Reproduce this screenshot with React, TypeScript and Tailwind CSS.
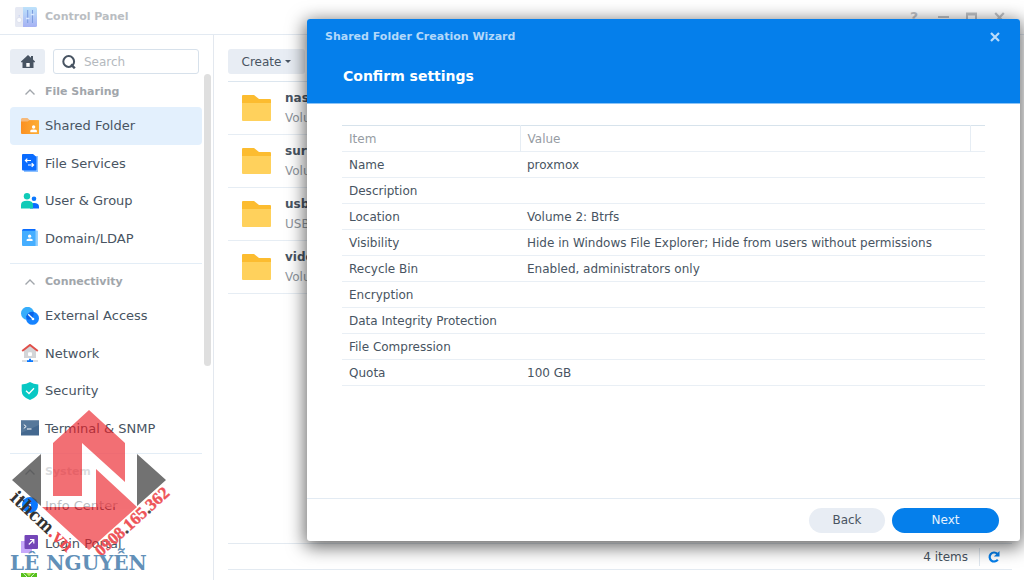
import type { ReactNode } from "react";
import clsx from "clsx";

interface NavItem {
  label: string;
  icon: ReactNode;
  active?: boolean;
}

interface NavGroup {
  title: string;
  items: NavItem[];
}

function Icon({ children }: { children: ReactNode }) {
  return (
    <svg viewBox="0 0 18 18" className="h-[18px] w-[18px] shrink-0" aria-hidden="true">
      {children}
    </svg>
  );
}

const groups: NavGroup[] = [
  {
    title: "File Sharing",
    items: [
      {
        label: "Shared Folder",
        active: true,
        icon: (
          <Icon>
            <path d="M0 2.5Q0 1 1.2 1H6.5L8.5 3H16.5Q17.6 3 17.6 4V9H0Z" fill="#f6b97a" />
            <path d="M0 4.5H6.5L8.5 3.2H18V17H1Q0 17 0 16Z" fill="url(#orange)" />
            <circle cx="12.6" cy="10" r="1.7" fill="#fff" />
            <path d="M9.3 15.2V14Q9.3 12.6 12.6 12.6T15.9 14V15.2Z" fill="#fff" />
            <defs>
              <linearGradient id="orange">
                <stop stopColor="#fb9022" />
                <stop offset="1" stopColor="#fdae35" />
              </linearGradient>
            </defs>
          </Icon>
        ),
      },
      {
        label: "File Services",
        icon: (
          <Icon>
            <path d="M3 2H17V18H3Z" fill="#8fc2ff" />
            <path d="M1 1Q1 0 2 0H12L15.5 3V15.5Q15.5 16.5 14.5 16.5H2Q1 16.5 1 15.5Z" fill="#0a6cff" />
            <path d="M10 6.5H4.5M6.3 4.6L4.4 6.5L6.3 8.4M7 11H12.5M10.7 9.1L12.6 11L10.7 12.9" fill="none" stroke="#fff" strokeWidth="1.2" />
          </Icon>
        ),
      },
      {
        label: "User & Group",
        icon: (
          <Icon>
            <circle cx="6" cy="4.2" r="3.2" fill="#10cbb8" />
            <circle cx="13" cy="6.8" r="2.3" fill="#0a78ff" />
            <path d="M9 16.5V13Q9 11 13 11Q18 11 18 14.5V16.5Z" fill="#0a6cff" />
            <path d="M0 16.5V13Q0 8.8 6 8.8T12 13V16.5Z" fill="#10cbb8" />
          </Icon>
        ),
      },
      {
        label: "Domain/LDAP",
        icon: (
          <Icon>
            <path d="M1 1.5Q1 0 2.5 0H14.5V3H1Z" fill="#0a6cff" />
            <path d="M1 1.8H16.5V17H2Q1 17 1 16Z" fill="#45aeff" />
            <path d="M14.5 1.8H16.5V17H14.5Z" fill="#8fceff" />
            <circle cx="8.6" cy="7.2" r="1.6" fill="#fff" />
            <path d="M5.6 12V11Q5.6 9.5 8.6 9.5T11.6 11V12Z" fill="#fff" />
          </Icon>
        ),
      },
    ],
  },
  {
    title: "Connectivity",
    items: [
      {
        label: "External Access",
        icon: (
          <Icon>
            <circle cx="6.5" cy="6.3" r="6.5" fill="#36adfb" />
            <circle cx="11.5" cy="11.3" r="6.5" fill="#1583ff" />
            <path d="M5.2 9.6A6.5 6.5 0 0 1 12.8 5Q13.1 12.5 6.5 12.8Z" fill="#0963e8" />
            <path d="M7.2 7.2L11.8 11.8" stroke="#fff" strokeWidth="1.3" />
            <circle cx="12" cy="12" r="1.3" fill="#fff" />
          </Icon>
        ),
      },
      {
        label: "Network",
        icon: (
          <Icon>
            <path d="M3 6L9 1.5L15 6V14H3Z" fill="#d3d5d8" />
            <path d="M1.2 7L9 .9L16.8 7" fill="none" stroke="#e0504a" strokeWidth="1.9" />
            <rect x="7" y="8.2" width="4" height="3.8" rx="1" fill="#fff" />
            <path d="M1 17H17" stroke="#c5c9ce" strokeWidth="1.2" />
            <path d="M6 16.2H8V14.8H10V16.2H12V18H6Z" fill="#0a78ff" />
          </Icon>
        ),
      },
      {
        label: "Security",
        icon: (
          <Icon>
            <path d="M9 0Q12.5 2.3 17.3 2.5V9Q17.3 15 9 18Q.7 15 .7 9V2.5Q5.5 2.3 9 0Z" fill="#08c8c4" />
            <path d="M5 8.8L8 11.5L13 6.2" fill="none" stroke="#fff" strokeWidth="1.3" />
          </Icon>
        ),
      },
      {
        label: "Terminal & SNMP",
        icon: (
          <Icon>
            <rect y="1.5" width="18" height="15" fill="#44688f" />
            <path d="M0 1.5H18V6L0 14Z" fill="#56789b" />
            <path d="M2.8 5.6L5.2 7.5L2.8 9.4M6 10H10.5" fill="none" stroke="#fff" />
          </Icon>
        ),
      },
    ],
  },
  {
    title: "System",
    items: [
      {
        label: "Info Center",
        icon: (
          <Icon>
            <circle cx="9" cy="8" r="8" fill="#0a78ff" />
            <path d="M8 7H10V13H8ZM8 3.5H10V5.5H8Z" fill="#fff" />
          </Icon>
        ),
      },
      {
        label: "Login Portal",
        icon: (
          <Icon>
            <rect y="6" width="11" height="12" fill="#c7a8fa" />
            <rect x="3.5" width="13.5" height="14" rx="1" fill="#7446b8" />
            <path d="M7.8 9.5L12.6 4.8M9 4.5H12.8V8.5" fill="none" stroke="#fff" strokeWidth="1.2" />
          </Icon>
        ),
      },
      {
        label: "",
        icon: (
          <Icon>
            <path d="M0 0H16V4H0Z" fill="#56c01c" />
            <path d="M5 0H11L8 3.2Z" fill="#b7e85e" />
            <path d="M2.5 .3L6 4M13.5 .3L10 4" stroke="#fff" strokeWidth=".8" />
          </Icon>
        ),
      },
    ],
  },
];

const folders = [
  { name: "nas", place: "Volume 1" },
  { name: "surveillance", place: "Volume 1" },
  { name: "usbshare1", place: "USB Disk" },
  { name: "video", place: "Volume 1" },
];

const settings = [
  ["Name", "proxmox"],
  ["Description", ""],
  ["Location", "Volume 2: Btrfs"],
  ["Visibility", "Hide in Windows File Explorer; Hide from users without permissions"],
  ["Recycle Bin", "Enabled, administrators only"],
  ["Encryption", ""],
  ["Data Integrity Protection", ""],
  ["File Compression", ""],
  ["Quota", "100 GB"],
];

function TitleBar() {
  return (
    <header className="flex h-[35px] shrink-0 items-center border-b border-[#e3eaf2] pr-[19px] pl-[15px]">
      <svg viewBox="0 0 22 20" className="h-5 w-[22px]" aria-hidden="true">
        <defs>
          <linearGradient id="panel" x1="0" y1="0" x2="0" y2="1">
            <stop stopColor="#bde2fb" />
            <stop offset="1" stopColor="#a5b1f3" />
          </linearGradient>
        </defs>
        <rect width="12" height="20" rx="1.5" fill="#e6e9f3" />
        <circle cx="4.2" cy="13" r="2.6" fill="#fafbfe" stroke="#d2d7e5" strokeWidth=".6" />
        <circle cx="4.2" cy="8.8" r=".6" fill="#b9c6ed" />
        <path d="M8 0H20.5Q22 0 22 1.5V18.5Q22 20 20.5 20H8Z" fill="url(#panel)" />
        <path d="M12.7 3V16M17.5 3V16" stroke="#7d9de0" />
        <path d="M11 11.5H14.4M15.8 7.5H19.2" stroke="#d9e8ff" strokeWidth="1.6" />
      </svg>
      <h1 className="ml-2 text-[11px] font-bold text-[#b9bdc2]">Control Panel</h1>
      <div className="ml-auto flex items-center gap-[17px] text-[#bfc2c6]">
        <button aria-label="Help" className="w-[11px] text-left text-sm leading-4 font-bold">?</button>
        <button aria-label="Minimize">
          <svg viewBox="0 0 11 11" className="h-[11px] w-[11px]">
            <path d="M0 5H11" stroke="currentColor" strokeWidth="2" />
          </svg>
        </button>
        <button aria-label="Maximize">
          <svg viewBox="0 0 11 11" className="h-[11px] w-[11px]">
            <path d="M1 2H10V10H1Z" fill="none" stroke="currentColor" strokeWidth="2" />
            <path d="M0 2H11" stroke="currentColor" strokeWidth="3" />
          </svg>
        </button>
        <button aria-label="Close">
          <svg viewBox="0 0 11 11" className="h-[11px] w-[11px]">
            <path d="M1.2 1L9.8 10M9.8 1L1.2 10" stroke="currentColor" strokeWidth="2.2" />
          </svg>
        </button>
      </div>
    </header>
  );
}

function Sidebar() {
  return (
    <aside className="w-[214px] shrink-0 overflow-hidden border-r border-[#e3e8ef] pt-[14px] pl-[10px]">
      <div className="flex gap-2 pr-[14px]">
        <button aria-label="Home" className="flex h-[25px] w-[35px] items-center justify-center rounded-[3px] bg-[#e8edf4]">
          <svg viewBox="0 0 14 13" className="h-[13px] w-[14px]">
            <path d="M7 0L10 2.8V1H12V4.6L14 6.6V7.2H12.5V13H1.5V7.2H0V6.6Z" fill="#485462" />
            <rect x="5.3" y="8" width="3.4" height="3.8" fill="#fff" />
          </svg>
        </button>
        <label className="flex h-[25px] min-w-0 flex-1 items-center gap-2 rounded-[3px] border border-[#d7e1eb] pl-2">
          <svg viewBox="0 0 14 14" className="h-[14px] w-[14px] shrink-0">
            <circle cx="6.7" cy="6.5" r="5.4" fill="none" stroke="#485462" strokeWidth="2" />
            <path d="M9 9.4L12.8 13.3" stroke="#485462" strokeWidth="2.4" />
          </svg>
          <input aria-label="Search" placeholder="Search" className="w-full min-w-0 text-xs outline-none placeholder:text-[#b4b9be]" />
        </label>
      </div>
      <div className="flex items-start gap-[2px]">
        <nav className="w-48">
          {groups.map((group, i) => (
            <section key={group.title} className={clsx("pt-[3px] pb-[6px]", i > 0 && "border-t border-[#e3edf6]")}>
              <button className="flex h-[30px] w-full items-center pl-[15px] text-[11px] font-bold text-[#a1a6ab]">
                <svg viewBox="0 0 10 6" className="mr-[10px] h-[6px] w-[10px]">
                  <path d="M.5 5.5L5 1L9.5 5.5" fill="none" stroke="currentColor" strokeWidth="1.4" />
                </svg>
                {group.title}
              </button>
              <ul className={clsx("grid", group.items.length === 4 ? "h-[150px]" : "h-[113px]")}>
                {group.items.map((item) => (
                  <li key={item.label} className="flex">
                    <a
                      href="#"
                      className={clsx(
                        "flex flex-1 items-center gap-[6px] rounded-[4px] pl-[11px] text-[13px] text-[#485462]",
                        item.active && "bg-[#e3f0fd]",
                      )}
                    >
                      {item.icon}
                      {item.label}
                    </a>
                  </li>
                ))}
              </ul>
            </section>
          ))}
        </nav>
        <div className="h-[292px] w-[7px] rounded-full bg-[#dfdfdf]" />
      </div>
    </aside>
  );
}

function FolderList() {
  return (
    <main className="flex min-w-0 flex-1 flex-col pt-[14px] pr-3 pb-[10px] pl-[14px]">
      <div className="border-b border-[#dce6ef] pb-[7px]">
        <button className="flex h-[25px] w-[77px] items-center justify-center gap-1 rounded-[3px] bg-[#e8edf4] text-xs text-[#485462]">
          Create
          <span className="border-x-[3px] border-t-[3px] border-x-transparent border-t-[#485462]" />
        </button>
      </div>
      <ul className="flex-1">
        {folders.map((folder) => (
          <li key={folder.name} className="flex h-[53px] items-center border-b border-[#e6edf4] pl-[14px]">
            <svg viewBox="0 0 29 26" className="mr-[14px] h-[26px] w-[29px]" aria-hidden="true">
              <path d="M0 1Q0 0 1 0H12L17 4H28Q29 4 29 5V12H0Z" fill="#fcbc30" />
              <path d="M0 8H29V25Q29 26 28 26H1Q0 26 0 25Z" fill="#ffd15c" />
            </svg>
            <div className="text-xs leading-5">
              <p className="font-bold text-[#485462]">{folder.name}</p>
              <p className="text-[#8f969d]">{folder.place}</p>
            </div>
          </li>
        ))}
      </ul>
      <footer className="flex h-[27px] items-center justify-end border-y border-[#e3eaf1] pr-3 text-xs text-[#485462]">
        <span className="pr-[11px]">4 items</span>
        <button aria-label="Refresh" className="border-l border-[#dfe7ef] py-[3px] pl-2">
          <svg viewBox="0 0 12 12" className="h-3 w-3">
            <path d="M9.8 8.6A4.5 4.5 0 1 1 9.3 2.8" fill="none" stroke="#057feb" strokeWidth="2.2" />
            <path d="M11.5 0V5.6H5.9Z" fill="#057feb" />
          </svg>
        </button>
      </footer>
    </main>
  );
}

function Wizard() {
  return (
    <div
      role="dialog"
      aria-label="Shared Folder Creation Wizard"
      className="absolute top-[19px] right-1 bottom-[39px] left-[307px] flex flex-col overflow-hidden rounded-[3px] bg-white shadow-[0_4px_18px_2px_rgba(0,0,0,0.6)]"
    >
      <header className="h-[85px] shrink-0 border-b border-[#8cc4f6] bg-[#057feb] pr-5 pl-[18px]">
        <div className="flex h-9 items-center justify-between">
          <span className="text-[11px] font-bold text-[#b2d8fa]">Shared Folder Creation Wizard</span>
          <button aria-label="Close wizard">
            <svg viewBox="0 0 10 10" className="h-[10px] w-[10px]">
              <path d="M1 1L9 9M9 1L1 9" stroke="#b9dcfb" strokeWidth="2.2" />
            </svg>
          </button>
        </div>
        <h2 className="pl-[18px] text-sm leading-[42px] font-bold text-white">Confirm settings</h2>
      </header>
      <div className="flex-1 pt-[21px] pr-[35px] pl-[35px]">
        <table className="w-full table-fixed text-left text-xs text-[#485462]">
          <thead>
            <tr className="h-[26px] border-t border-b border-t-[#d7e3ec] border-b-[#e9eff5] text-[#969ca3]">
              <th className="w-[178px] border-r border-[#e6edf4] pl-[7px] font-normal">Item</th>
              <th className="border-r border-[#e6edf4] pl-[7px] font-normal">Value</th>
              <th className="w-[15px]" />
            </tr>
          </thead>
          <tbody>
            {settings.map(([item, value]) => (
              <tr key={item} className="h-[26px] border-b border-[#e9eff5]">
                <td className="pl-[7px]">{item}</td>
                <td colSpan={2} className="pl-[7px]">{value}</td>
              </tr>
            ))}
          </tbody>
        </table>
      </div>
      <footer className="flex h-[43px] shrink-0 items-center justify-end gap-[7px] border-t border-[#e3ebf3] pr-[21px] text-xs">
        <button className="h-[25px] w-[76px] rounded-full bg-[#e8edf4] text-[#485462]">Back</button>
        <button className="h-[25px] w-[107px] rounded-full bg-[#057feb] text-[#e6f2fd]">Next</button>
      </footer>
    </div>
  );
}

function Watermark() {
  return (
    <svg viewBox="0 0 180 180" className="pointer-events-none absolute bottom-0 left-0 h-[180px] w-[180px]">
      <path d="M41 54L53 43H125L137 54V107H41Z" fill="#fff" opacity=".62" />
      <g fill="#ec1c24" opacity=".63">
        <path d="M89 10L125 43V82L82 43V96H53V43Z" />
        <path d="M96 69L137 107L89 150L42 107H96Z" />
      </g>
      <path d="M12 80L41 54V106ZM166 80L137 54V106Z" fill="#4a4a4a" opacity=".78" />
      <text transform="translate(9 99) rotate(43)" className="font-['DejaVu_Serif_Condensed','DejaVu_Serif',serif] text-[18px] font-bold" fill="#333">
        ithcm<tspan fill="#ee4b50">.vn</tspan>
      </text>
      <text transform="translate(101 157) rotate(-42)" className="font-['Liberation_Serif',serif] text-[17px] font-bold" fill="#ee5358" stroke="#ee5358" strokeWidth=".4">
        0908<tspan fill="#444" stroke="#444">.</tspan>165<tspan fill="#444" stroke="#444">.</tspan>362
      </text>
      <text x="10" y="170" className="font-['DejaVu_Serif',serif] text-[20px] font-bold" fill="#6290b8">
        LÊ NGUYỄN
      </text>
    </svg>
  );
}

export default function App() {
  return (
    <div className="relative flex h-screen flex-col overflow-hidden bg-white font-['DejaVu_Sans',sans-serif]">
      <TitleBar />
      <div className="flex min-h-0 flex-1">
        <Sidebar />
        <FolderList />
      </div>
      <Wizard />
      <Watermark />
    </div>
  );
}
